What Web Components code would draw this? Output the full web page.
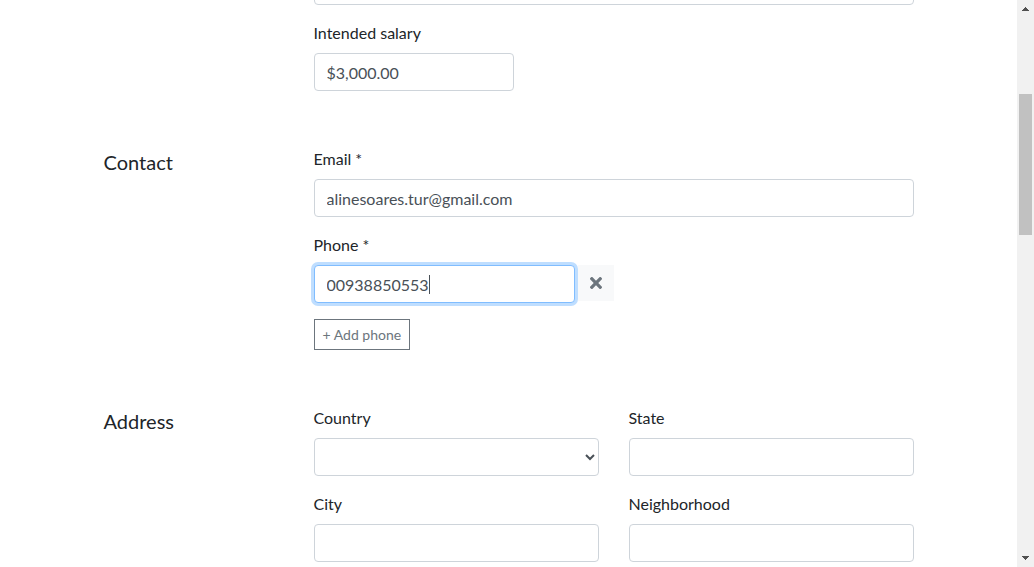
<!DOCTYPE html>
<html lang="en">
<head>
<meta charset="utf-8">
<title>Profile</title>
<style>
  body { margin: 0; font: 16px/24px Lato, "Liberation Sans", sans-serif; color: #212529; background: #fff; }
</style>
</head>
<body>
<profile-page>
  <form-section>
    <form-field label="Area of interest" unlabelled></form-field>
    <form-field label="Intended salary" value="$3,000.00" size="short"></form-field>
  </form-section>
  <form-section heading="Contact">
    <form-field label="Email *" type="email" value="alinesoares.tur@gmail.com"></form-field>
    <phone-field label="Phone *" value="00938850553"></phone-field>
    <add-button>+ Add phone</add-button>
  </form-section>
  <form-section heading="Address" columns="2">
    <form-field label="Country" type="select"></form-field>
    <form-field label="State"></form-field>
    <form-field label="City"></form-field>
    <form-field label="Neighborhood"></form-field>
  </form-section>
</profile-page>

<script>
const controlStyles = `
  :host { display: block; }
  label { display: block; margin-bottom: 8px; }
  input, select {
    box-sizing: border-box; display: block; width: 100%; height: 38px; margin: 0;
    padding: 6px 12px; font: inherit; color: #495057; background: #fff;
    border: 1px solid #ced4da; border-radius: 4px; outline: none;
  }
  input:focus, select:focus, input.active { border-color: #80bdff; box-shadow: 0 0 0 3px #bfdeff; }
`;

class ProfilePage extends HTMLElement {
  connectedCallback() {
    this.attachShadow({ mode: 'open' }).innerHTML = `
      <style>
        :host { display: flex; height: 100vh; overflow: hidden; }
        main { flex: 1; min-width: 0; overflow: hidden; }
        /* the view is scrolled partway into the first field */
        form { display: flex; flex-direction: column; gap: 56px; max-width: 810px; margin: -33px auto 0; }
      </style>
      <main><form><slot></slot></form></main>
      <scroll-rail></scroll-rail>`;
  }
}

class FormSection extends HTMLElement {
  connectedCallback() {
    const heading = this.getAttribute('heading');
    this.attachShadow({ mode: 'open' }).innerHTML = `
      <style>
        :host { display: grid; grid-template-columns: 180fr 600fr; column-gap: 30px; }
        h2 { margin: 0; font-size: 20px; line-height: 30px; font-weight: 400; }
        .fields { grid-column: 2; display: grid; gap: 16px 30px; align-items: start; }
        :host([columns="2"]) .fields { grid-template-columns: 1fr 1fr; }
      </style>
      ${heading ? `<h2>${heading}</h2>` : ''}
      <div class="fields"><slot></slot></div>`;
  }
}

class FormField extends HTMLElement {
  connectedCallback() {
    const label = this.getAttribute('label');
    const type = this.getAttribute('type') || 'text';
    const value = this.getAttribute('value') || '';
    const plain = this.hasAttribute('unlabelled');
    this.attachShadow({ mode: 'open' }).innerHTML = `
      <style>${controlStyles}
        :host([size="short"]) input { width: 200px; }
      </style>
      ${plain ? '' : `<label for="control">${label}</label>`}
      ${type === 'select'
        ? '<select id="control"><option value=""></option></select>'
        : `<input id="control" type="${type}" value="${value}" ${plain ? `aria-label="${label}"` : ''}>`}`;
  }
}

class PhoneField extends HTMLElement {
  connectedCallback() {
    this.attachShadow({ mode: 'open' }).innerHTML = `
      <style>${controlStyles}
        .group { display: flex; align-items: flex-start; gap: 3px; width: 300px; }
        .entry { position: relative; flex: 1; z-index: 1; }
        .caret { position: absolute; left: 115px; top: 10px; width: 1px; height: 19px; background: #495057; }
        button {
          display: flex; align-items: center; justify-content: center;
          width: 36px; height: 36px; padding: 0; border: 0; background: #f8f9fa; color: #6c757d;
        }
        svg { display: block; width: 12px; height: 12px; }
      </style>
      <label for="phone">${this.getAttribute('label')}</label>
      <div class="group">
        <div class="entry">
          <input id="phone" class="active" type="tel" value="${this.getAttribute('value')}">
          <span class="caret"></span>
        </div>
        <button type="button" aria-label="Remove phone">
          <svg viewBox="0 0 352 352" fill="currentColor" aria-hidden="true"><path d="M243 176l100-100c12-12 12-32 0-44L321 9c-12-12-32-12-44 0L176 109 76 9C64-3 44-3 32 9L9 32c-12 12-12 32 0 44l100 100L9 276c-12 12-12 32 0 44l23 23c12 12 32 12 44 0l100-100 101 100c12 12 32 12 44 0l22-23c12-12 12-32 0-44z"/></svg>
        </button>
      </div>`;
  }
}

class AddButton extends HTMLElement {
  connectedCallback() {
    this.attachShadow({ mode: 'open' }).innerHTML = `
      <style>
        :host { display: block; }
        button {
          display: block; padding: 4px 8px; font: inherit; font-size: 14px; line-height: 21px;
          color: #6c757d; background: transparent; border: 1px solid #6c757d; border-radius: 0;
        }
      </style>
      <button type="button"><slot></slot></button>`;
  }
}

class ScrollRail extends HTMLElement {
  connectedCallback() {
    this.attachShadow({ mode: 'open' }).innerHTML = `
      <style>
        :host { display: flex; flex-direction: column; flex: none; width: 17px; background: #f1f1f1; }
        svg { display: block; flex: none; width: 17px; height: 17px; fill: #505050; }
        .track { flex: 1; display: grid; grid-template-rows: 77fr 141fr 315fr; padding: 0 2px; }
        .thumb { grid-row: 2; background: #c1c1c1; }
      </style>
      <svg viewBox="0 0 17 17" shape-rendering="crispEdges"><path d="M8 7h1v1h1v1h1v1h1v1H5v-1h1V9h1V8h1z"/></svg>
      <div class="track"><div class="thumb"></div></div>
      <svg viewBox="0 0 17 17" shape-rendering="crispEdges"><path d="M5 6h7v1h-1v1h-1v1H9v1H8V9H7V8H6V7H5z"/></svg>`;
  }
}

customElements.define('scroll-rail', ScrollRail);
customElements.define('form-field', FormField);
customElements.define('phone-field', PhoneField);
customElements.define('add-button', AddButton);
customElements.define('form-section', FormSection);
customElements.define('profile-page', ProfilePage);
</script>
</body>
</html>
